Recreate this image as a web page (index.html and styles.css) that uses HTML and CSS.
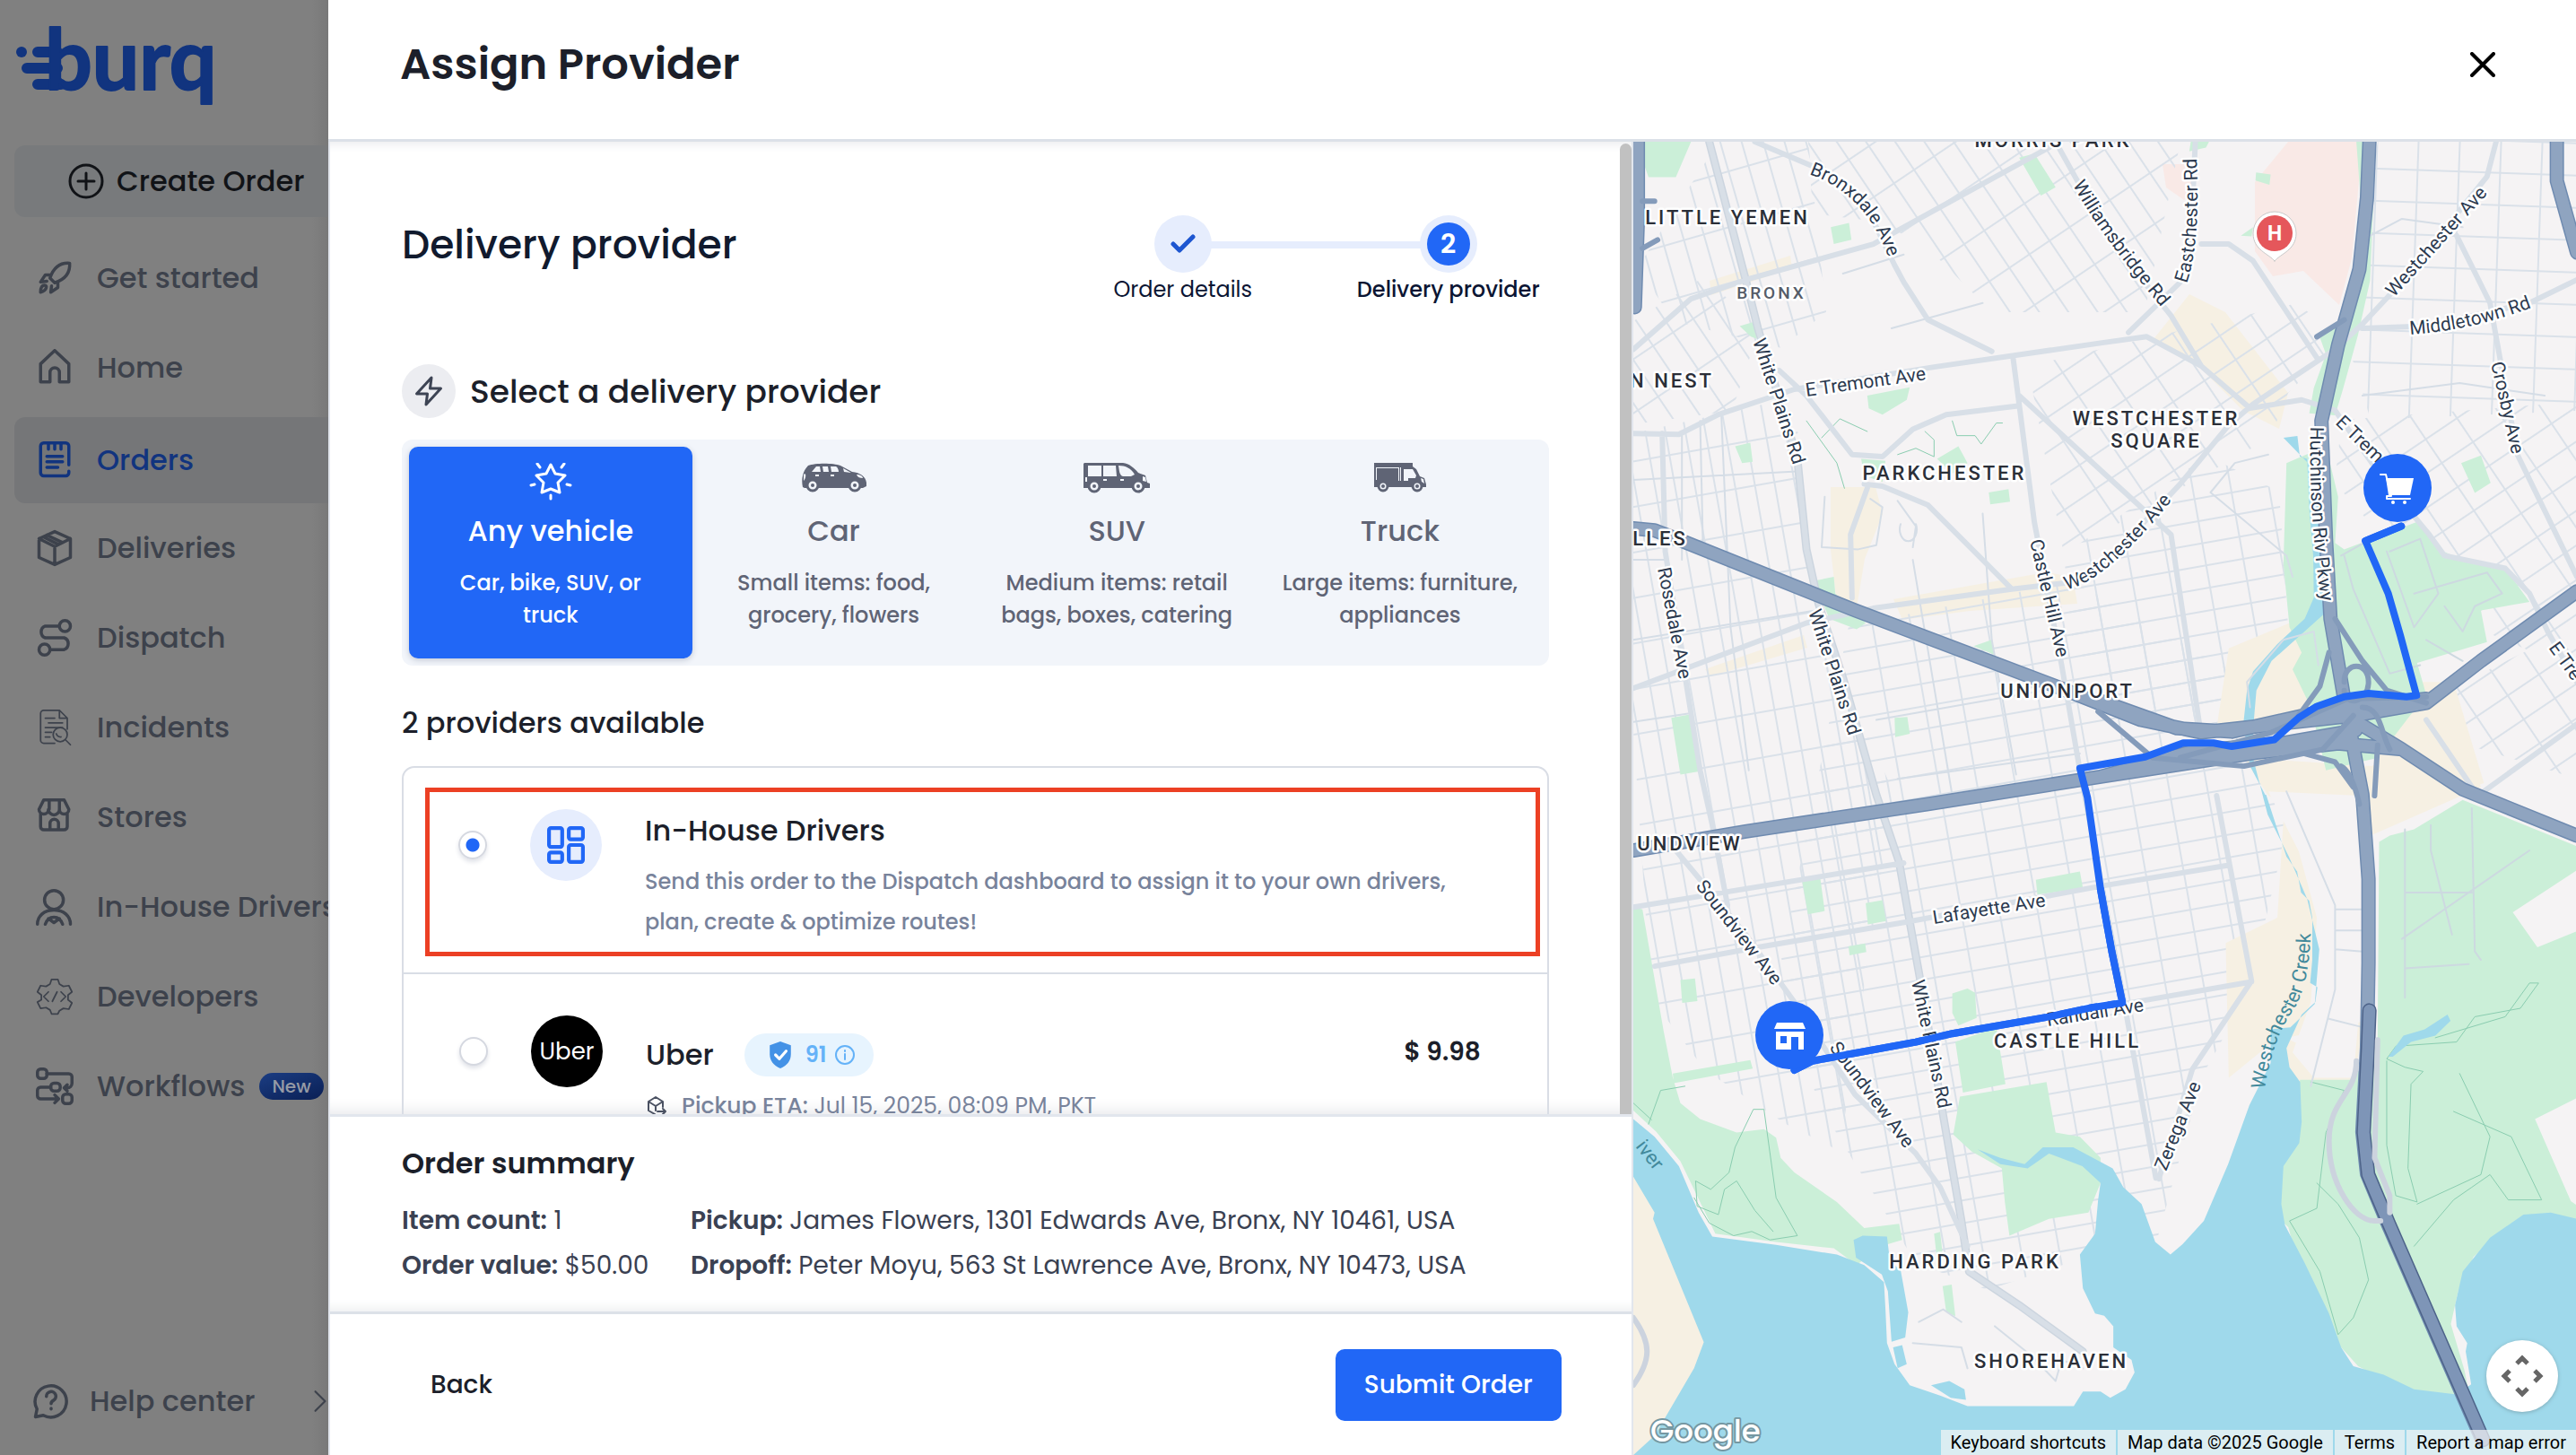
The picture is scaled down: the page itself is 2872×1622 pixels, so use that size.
FILE: index.html
```html
<!DOCTYPE html>
<html lang="en">
<head>
	<meta charset="utf-8">
	<title>Assign Provider</title>
	<link rel="stylesheet" href="styles.css">
</head>
<body>
	<div class="app">
	    <aside class="sidebar">
	        <svg class="logo" viewBox="0 0 250 130" role="img" aria-label="burq">
	            <path class="logo-lines" d="M42 41h22M30 59h34M42 77h26"/>
	            <circle cx="24" cy="41" r="6"/>
	            <text x="50" y="83">burq</text>
	        </svg>
	        <button class="create" type="button">
	            <svg viewBox="0 0 40 40"><circle cx="20" cy="20" r="18"/><path d="M20 11v18M11 20h18"/></svg>
	            Create Order
	        </button>
	        <nav class="nav">
	            <a href="#"><svg viewBox="0 0 24 24"><path d="M9 12C11 6 15 2 21.500 2.500 22 9 18 13 12 15zM9 12l3 3M9.500 10H6l-3 4.500 4-.5M14 14.500V18l-4.500 3 .5-4M3 21c0-2.500.5-4.500 2.500-4.500S7 20 3 21z"/></svg>Get started</a>
	            <a href="#"><svg viewBox="0 0 24 24"><path d="M3 9.500L12 1l9 8.500V21h-6v-6a3 3 0 0 0-6 0v6H3z"/></svg>Home</a>
	            <a href="#" class="active"><svg viewBox="0 0 24 24"><path d="M21 15V3a2 2 0 0 0-2-2H5a2 2 0 0 0-2 2v17a2 2 0 0 0 2 2h14a2 2 0 0 0 2-2v-1M8 1v4M12 1v4M16 1v4M7 9.500h10M7 13h10M7 16.500h7"/></svg>Orders</a>
	            <a href="#"><svg viewBox="0 0 24 24"><path d="M12 1.500l10 4.500v12l-10 4.500L2 18V6zM2 6l10 5 10-5M12 11v11M7 3.700l10 4.800M5 5l9 4.500"/></svg>Deliveries</a>
	            <a href="#"><svg viewBox="0 0 24 24"><circle cx="18.500" cy="4.500" r="3.500"/><circle cx="5.500" cy="19.500" r="3.500"/><path d="M15 4.500H6a4 4 0 0 0 0 7.500h12a4 4 0 0 1 0 7.500H9"/></svg>Dispatch</a>
	            <a href="#"><svg class="fine" viewBox="0 0 24 24"><path d="M12 22H5a2 2 0 0 1-2-2V3a2 2 0 0 1 2-2h10l5 5v7M15 1v5h5M6 6h6M8 9h9M6 12h11M6 15h4M6 18h3"/><circle cx="15.500" cy="16.500" r="4.500"/><path d="M19 20l3 3M13 16a3 3 0 0 0 3 2"/></svg>Incidents</a>
	            <a href="#"><svg viewBox="0 0 24 24"><path d="M5 1h13l3 6a3 3 0 0 1-6 0 3.500 3.500 0 0 1-7 0 3 3 0 0 1-6 0zM8.500 1v6M15 1v6M3 10v8a2 2 0 0 0 2 2h13a2 2 0 0 0 2-2v-8M9 20v-4a2.700 2.700 0 0 1 5.400 0v4"/></svg>Stores</a>
	            <a href="#"><svg viewBox="0 0 24 24"><circle cx="11.500" cy="7.500" r="6"/><path d="M1 23c0-5 4-9 10.500-9S22 18 22 23M6 23c1-3 3-4.500 5.500-4.500S16 20 17 23M8 19.500l3.500 2.500 3.500-2.500"/></svg>In-House Drivers</a>
	            <a href="#"><svg class="fine" viewBox="0 0 24 24"><path d="M10 1h4l1 3 2.500 1.500L21 5l2 4-2.500 2v3l2.500 2-2 4-3.500-.5L15 21l-1 2h-4l-1-2.500L6.500 19 3 19.500l-2-4L3.500 14v-3L1 9l2-4 3.500.5L9 4zM8 9l-3 3 3 3M16 9l3 3-3 3M13.500 9l-3 6"/></svg>Developers</a>
	            <a href="#"><svg viewBox="0 0 24 24"><rect x="1" y="1" width="6" height="6" rx="2"/><rect x="9.500" y="10" width="6" height="5" rx="2"/><rect x="17" y="17" width="6" height="6" rx="2"/><path d="M7 4h14a2 2 0 0 1 2 2v4a3 3 0 0 1-3 3h-2M20 11l-2 2 2 2M9.500 12.500H3a2 2 0 0 0-2 2V18a2 2 0 0 0 2 2h11M12 17.500l2.500 2.500-2.500 2.500"/></svg>Workflows<span class="new">New</span></a>
	        </nav>
	        <a href="#" class="help">
	            <svg viewBox="0 0 24 24"><path d="M2 22l1-5a10 10 0 1 1 4 4zM9 9a3 3 0 1 1 4.500 2.500c-1 .6-1.500 1-1.500 2M12 16.500v.5"/></svg>
	            Help center
	            <svg class="chevron" viewBox="0 0 16 24"><path d="M3 2l10 10L3 22"/></svg>
	        </a>
	    </aside>

	    <main class="drawer">
	        <header class="drawer-head">
	            <h1>Assign Provider</h1>
	            <button class="close" type="button" aria-label="Close"><svg viewBox="0 0 28 28"><path d="M2 2l24 24M26 2L2 26"/></svg></button>
	        </header>
	        <div class="drawer-body">
	            <section class="panel">
	                <div class="scroller">
	                    <div class="panel-head">
	                        <h2>Delivery provider</h2>
	                        <ol class="steps">
	                            <li><span class="dot"><svg viewBox="0 0 28 22"><path d="M3 11l7 7L25 3"/></svg></span>Order details</li>
	                            <li class="current"><span class="dot"><b>2</b></span>Delivery provider</li>
	                        </ol>
	                    </div>

	                    <h3 class="select-title">
	                        <span class="bolt"><svg viewBox="0 0 24 24"><path d="M14 2L3 14h8l-1 8L21 10h-8z"/></svg></span>
	                        Select a delivery provider
	                    </h3>

	                    <div class="vehicles">
	                        <button type="button" class="vehicle selected">
	                            <svg class="star" viewBox="0 0 46 42"><path d="M23 2l5 10 11 2-8 8 2 11-10-4-10 4 2-11-8-8 11-2zM8 1l3 4M38 1l-3 4M1 25l4-1M45 25l-4-1M23 36v4"/></svg>
	                            <strong>Any vehicle</strong>
	                            <span>Car, bike, SUV, or truck</span>
	                        </button>
	                        <button type="button" class="vehicle">
	                            <svg viewBox="0 0 74 34">
	                                <path d="M2 27C0 18 2 9 8 3 16 0 36 0 44 3l13 7c9 1 15 5 16 12v4l-4 2H4z"/>
	                                <g class="hole"><path d="M12 10l5-6h4l1 6zM24 4h6l1 6h-6zM33 4h6c2 1 3 4 3 6h-8zM47 6l9 5-8-1zM62 13c4 0 7 2 7 4-3 0-6-1-7-4zM3 13c3-3 3 4 0 7zM16 13h4v2h-4zM33 13h4v2h-4z"/><circle cx="13" cy="25" r="6"/><circle cx="60" cy="25" r="6"/></g>
	                                <circle class="tyre" cx="13" cy="25" r="6"/><circle class="tyre" cx="60" cy="25" r="6"/><circle cx="13" cy="25" r="2"/><circle cx="60" cy="25" r="2"/>
	                            </svg>
	                            <strong>Car</strong>
	                            <span>Small items: food, grocery, flowers</span>
	                        </button>
	                        <button type="button" class="vehicle">
	                            <svg viewBox="0 0 74 34">
	                                <path d="M1 0h43c7 1 12 5 17 11l8 3 2 8 3 1v5H0V1z"/>
	                                <g class="hole"><path d="M5 3h15v12H5zM22 3h14l1 12H22zM39 3c8 0 14 3 18 10l-4 2h-9c-4-1-4-6-5-12zM66 15l3 1 1 5-4-1zM2 16h2v5H2zM22 18h4v2h-4zM41 18h4v2h-4z"/><circle cx="12" cy="26" r="6"/><circle cx="61" cy="26" r="6"/></g>
	                                <circle class="tyre" cx="12" cy="26" r="6"/><circle class="tyre" cx="61" cy="26" r="6"/><circle cx="12" cy="26" r="2"/><circle cx="61" cy="26" r="2"/>
	                            </svg>
	                            <strong>SUV</strong>
	                            <span>Medium items: retail bags, boxes, catering</span>
	                        </button>
	                        <button type="button" class="vehicle">
	                            <svg viewBox="-8 0 74 34">
	                                <path d="M0 0h43v4l4 3 4 8 5 2 2 7v3H0z"/>
	                                <g class="hole"><path d="M2 5h26v15h-1V6H3v13H2zM29 5h1v15h-1zM33 7h10l4 7-1 3h-8v3h-5zM52 17l3 1 1 5-3-2z"/><circle cx="10" cy="26" r="5"/><circle cx="48" cy="26" r="5"/></g>
	                                <circle class="tyre" cx="10" cy="26" r="5"/><circle class="tyre" cx="48" cy="26" r="5"/><circle cx="10" cy="26" r="2"/><circle cx="48" cy="26" r="2"/>
	                            </svg>
	                            <strong>Truck</strong>
	                            <span>Large items: furniture, appliances</span>
	                        </button>
	                    </div>

	                    <h4 class="count">2 providers available</h4>

	                    <div class="providers">
	                        <div class="highlight">
	                            <label class="provider">
	                                <input type="radio" name="provider" checked>
	                                <span class="avatar blue"><svg viewBox="0 0 40 40"><rect x="2" y="2" width="14" height="20" rx="2"/><rect x="23" y="2" width="15" height="12" rx="2"/><rect x="2" y="28" width="14" height="10" rx="2"/><rect x="23" y="20" width="15" height="18" rx="2"/></svg></span>
	                                <span class="info">
	                                    <span class="name">In-House Drivers</span>
	                                    <span class="desc">Send this order to the Dispatch dashboard to assign it to your own drivers, plan, create &amp; optimize routes!</span>
	                                </span>
	                            </label>
	                        </div>
	                        <label class="provider second">
	                            <input type="radio" name="provider">
	                            <span class="avatar black">Uber</span>
	                            <span class="info">
	                                <span class="name">Uber
	                                    <span class="score">
	                                        <svg class="shield" viewBox="0 0 24 28"><path d="M12 0l11 4v9c0 7-4 12-11 15C5 25 1 20 1 13V4z"/><path class="tick" d="M7 14l4 4 7-8"/></svg>
	                                        91
	                                        <svg class="i" viewBox="0 0 24 24"><circle cx="12" cy="12" r="10"/><path d="M12 11v6M12 7v1"/></svg>
	                                    </span>
	                                </span>
	                                <span class="eta"><svg viewBox="0 0 24 24"><path d="M10 21l-7-4V7l8-5 8 5v6M3 7l8 5 8-5M11 12v5M13 18h9M19 15l3 3-3 3"/></svg><span><b>Pickup ETA:</b> Jul 15, 2025, 08:09 PM, PKT</span></span>
	                            </span>
	                            <span class="price">$ 9.98</span>
	                        </label>
	                    </div>
	                    <div class="thumb"></div>
	                </div>

	                <div class="summary">
	                    <h4>Order summary</h4>
	                    <div class="summary-grid">
	                        <span><b>Item count:</b> 1</span>
	                        <span><b>Pickup:</b> James Flowers, 1301 Edwards Ave, Bronx, NY 10461, USA</span>
	                        <span><b>Order value:</b> $50.00</span>
	                        <span><b>Dropoff:</b> Peter Moyu, 563 St Lawrence Ave, Bronx, NY 10473, USA</span>
	                    </div>
	                </div>
	                <footer class="actions">
	                    <button type="button" class="back">Back</button>
	                    <button type="submit" class="submit">Submit Order</button>
	                </footer>
	            </section>

	            <section class="map">
	                <svg class="map-canvas" viewBox="0 0 1052 1464" preserveAspectRatio="xMinYMin slice">
	                    <defs>
	                        <pattern id="g1" width="42" height="25" patternUnits="userSpaceOnUse" patternTransform="rotate(-10)"><path class="street" d="M0 1h42M1 0v25"/></pattern>
	                        <pattern id="g2" width="22" height="50" patternUnits="userSpaceOnUse" patternTransform="rotate(-10)"><path class="street" d="M0 1h22M1 0v50"/></pattern>
	                        <pattern id="g3" width="50" height="27" patternUnits="userSpaceOnUse" patternTransform="rotate(56)"><path class="street" d="M0 1h50M1 0v27"/></pattern>
	                        <pattern id="g4" width="46" height="36" patternUnits="userSpaceOnUse" patternTransform="rotate(2)"><path class="street" d="M0 1h46M1 0v36"/></pattern>
	                        <pattern id="g5" width="42" height="32" patternUnits="userSpaceOnUse" patternTransform="rotate(-34)"><path class="street" d="M0 1h42M1 0v32"/></pattern>
	                        <pattern id="g6" width="23" height="60" patternUnits="userSpaceOnUse" patternTransform="rotate(-16)"><path class="street" d="M0 1h23M1 0v60"/></pattern>
	                    </defs>
	                    <rect width="1052" height="1464" fill="#f5f3f4"/>

	                    <!-- commercial strips and the hospital campus -->
	                    <path class="sand" d="M85 155l90-28 2 14-90 30zM220 385h50l8 30-20 50-10 60h-20l-8-70zM290 510l170-30 30 5 5 30-120 8-75 10zM80 588l110-38 4 14-108 32zM620 170l40 20 70 90-10 40-40-20-60-60-40-20z"/>
	                    <path class="rose" d="M730 0h83l-12 130-14 52-40-38-34 6-20-28V45zM590 25h36v30l-12 10-20-14z"/>

	                    <!-- street grids -->
	                    <path fill="url(#g6)" d="M95 0h100l20 190-50 40-120-30-40-60z"/>
	                    <path fill="url(#g3)" d="M195 0h415l-40 190-170 0-60-60-60-40-80-10zM0 200l80-50 60 60-30 90-110 15z"/>
	                    <path fill="url(#g2)" d="M0 325l180-40 20 240 90 200-60 400-60-30-90-60-60-80-20-300z"/>
	                    <path fill="url(#g1)" d="M240 540l250-50 230 130 20 100-55 230-50 90-50 180-100 30-90 30-80-30-110-180-40-160z"/>
	                    <path fill="url(#g5)" d="M440 250l300-70 50 40-60 60-20 50-230 130z"/>
	                    <path fill="url(#g1)" d="M480 460l160-110 80 40 10 150-20 90-60 20-110-30-50-60z"/>
	                    <path fill="url(#g4)" d="M830 0h222v300l-230 10-30-100z"/>
	                    <path fill="url(#g5)" d="M790 310l262-20v300l-140-60-130-150zM850 640l202-100v170l-130-40z"/>

	                    <!-- land cover; drawn on a 3106 x 3119 sheet and scaled to the pane -->
	                    <g class="sheet" transform="scale(.3387 .4694) translate(-30 -17)">
	                        <path class="sand" d="M2190 1160l90 10 10 180-60 50-280 10 40-190zM2040 1480l420 20 300-100 60 150-380 120-320-100zM1980 1920l170-60 20-230 120 170 20 200-60 170-90-30-170 100zM2150 2150l60 100 190-5 40-140z"/>
	                        <path class="land" d="M2120 1560l300 10 10 430-30 240-130 0-70-60 60-120 20-200-60-160z"/>
	                        <path class="sand" d="M2470 1300h260l100 240-360 80z"/>
	                        <path class="park" d="M65 17h155l-50 84H80L65 70zM1300 55l50-10 70 80-48 20zM680 220l60-10 8 40-58 10zM380 455l45-10 12 40-20-5zM365 740l50-8 8 45-35 3zM800 620l140-20-10 30-80 35-45-15zM780 770l80 5-10 50-60-15zM1030 770l70-30 30 40-50 25zM1200 850l65-8 5 30-65 6zM155 1385l60-8 35 135-65 8zM625 1060l65-10 5 40 100 70-30 15-90-25zM890 1385l42-2 8 40-48 8zM1150 1215l60-15 8 35zM585 1770l60-6 15 80-55 8zM795 1825l55-7 12 50-60 8zM738 1928l55-7 4 20-55 8zM1355 1770l145-20 10 40-150 15zM185 2008l48-4 8 54-50 4zM1080 2040l50-12 25 10 5 60-60 18-20-30zM2755 780l65-18 32 65-52 24zM1020 2610l20-4 10 65-20 2zM1048 2735l30-4 12 75-30-10zM1860 40l5-23h60l-10 14zM2080 90l48 5-4 24-46-10zM2030 240l40-20-5 22z"/>
	                        <path class="park" d="M30 1835l30 5 70 290 30 110 25 60 65 38 120 32 90-8 40 20 15 48 45 35 140 70 90 62 115-10 10 38-70 15-80 45-75-40-190-15-200-20-115-172-80-70-75-50zM160 2230l255-32 8 20-260 35zM1090 2155l135-35 30 135-140 20zM1105 2285l285-35 30 120 80 10 68 50v60l-40 70-130 15-130 40-15-80-10-80-100-40-60-40z"/>
	                        <path class="park" d="M2410 17h65l-20 330-40 130-50 130-25 60-85-5 15-60 40-80-20-40 60-40 50-130 25-150zM2310 740l40 120-10 110 30 15 240-65 70 65 50 15 170 30 80 80-160 20 20 75-230 50 30 75-160 150-170 30-50-150-60-90 30-40-40-60-20-150 10-240z"/>
	                        <path class="park" d="M2225 2245h175l80-95 5-470 35-15 80-15 160-70 376 110v900l-80-15-150 20-110 70-50 80-25 80 45 110 20 70-50 0-160-20-160-60-150-120-80-210-90-60z"/>
	                        <path class="land" d="M2925 1847l211-100v145l-130 38zM2998 2338l138-50v255l-20-10z"/>
	                        <path class="park-line" d="M600 680l100 100 25 60M650 720l60-45 90 30M900 760l60-15 60 20 0-40-30-20M1080 680l15 35 60 0 20 20 50-50h20M230 2525l50 60 80 30 60-10 60 20 90-10-70-90-40-210-35 0-60 90-20 60-60 40-50-20 5 60 70 20 20-60 40-20 60 70 60 50M80 2350l40-80 80-10M30 2300l60 40M2260 2250l110 20-60 100-30 180-90 30 100 120 60 150 50-40 50-90-30-100-70-80-70-50M2510 2200v200l30 120 70 15-30-80 10-200 40-30-60-10-60-20 30-30 200-10 60-60 150-20 60-60-30 0-80 80-230 50M2750 2230l100 150-30 90-210 70M2600 2640l130-110 60-30 60-30 60 60 110 0-100-150-190-60"/>
	                        <path class="park-path" d="M2360 1000l100-40M2370 1000l30 80 60 100 60 100 100-20M2520 990l100-30 60 130-80 80-90-180M2600 1090l240-50 50 50-90 30-40 60-60-60M2640 1200l120 50M2570 1650v400M2570 1800h220M2570 1980l210-10M2655 1640v60l70 200M2790 1600l10 340 20 20M2560 1910l420-210"/>
	                        <path class="water" d="M2170 720l46-4 8 49 24 5 8 130 12 100 2 100-30 50-90 60-80 65-20 45-12 80 22 100 50 68h3l37 82 30 65 35 35 13 50 27 20 10 40v100l-7 55 24 10-7 35-45 30-50 80 10 45 35 35 5 95-8 50-52 55-7 90 12 50 65 90 80 120 40 80 40 45 100 20 100 35 140 12 48-24-18-78 5-20-35-40-5-50 25-80 90-80 110-55 90-5 86 15v561H30v-798l70 42 80 70 65 110 45 57 210 20 200 23 90 25 65 40 5 65 5 80 25 50 50 50 100 25 90 25h350l30-35h58l32 15 50-20 30-40-10-30-60-30v-50l-30-25-30-5-40-60-10-80 50-50 10-80 8-40-60-40-110-30-70 35-90-10-75-35 75 20 80 15 60-40 100 0 130 50 35 45 60 40 45 90 50 30 40-25 70-55 80-135 70-140 70-100v-80l65-5 80-55 15-130-40-120-60-100-70-100-50-140 3-70 10-85 50-70 170-110 15-40-5-140-20-150z"/>
	                        <path class="water" d="M755 2625l30-10 80 2 10 60 35 20 25 100-10 60-45 10-12-120-20-40-85-40zM885 2880l30-5 15 45-30 10zM1010 2970l60-10 50 20 5 25-50-5zM2515 2190l50-50 70-15 75-35 10 15-50 35-80 15-60 35z"/>
	                        <path class="sand" d="M30 2475l70 85-5 15 167 293-32 62-130 160-70 46v-661z"/>

	                        <!-- local roads -->
	                        <path class="minor" d="M30 1395l180-20M30 1200l600-70M30 1010h100M250 680l10 320M320 670l30 500 60 340M190 710v300M30 820l540-20M720 330l200-45M880 460l300-60M900 870l60 60-10 50M910 925a28 28 0 1 0 50 0M660 860l-10 120 120 5 60-10 20-90-40-20M830 1390l630-80M900 1530l600-60M950 1010l130 560M1180 900l30 300 80 320M2430 620l320-30 280 30M2430 250l130-50 200 20M1930 850l80-70 110-20M1930 850l250 150 20 50M2060 1360l-10-60 120-100 100-20 15 80M2180 1560l160 270v200l-80 230M2340 1840h90M2340 1890h90M2340 1935l90 5M2320 2100l110 20M950 2870l160 10 20 50M970 2820l80-30 60 30M1220 2830l120 70 80 60 20-50 70 20"/>
	                        <!-- arterials -->
	                        <path class="road-edge" d="M280 17L400 345l40 115 130 310 30 215 40 130 80 175 110 278 75 160 25 102 50 200 70 300 60 250 25 120 165 80 210 110"/>
	                        <path class="road" d="M280 17L400 345l40 115 130 310 30 215 40 130 80 175 110 278 75 160 25 102 50 200 70 300 60 250 25 120 165 80 210 110M30 710l150 2 130-47 250-60 460-53 548-57 152-15 180 70 160 100 170-20 110 25 160 165 150 130 50 50 200 30 80 60 60 90 96 120M510 560l90 60 150 140 100 5 100-65 110-35 230-20M790 830l60 5 150 45 270 195M800 840l-55 110 5 150M1280 530l20 110 50 280 90 340 60 250 150 568 100 400M30 1315l570-155 220-35 450-45 180-15 118-35 262-200 160-140 80-50 270-130 90-60 130-100 280-250 30-83M430 17l190 58 170 85 100 150 30 40 80 90 210 75M30 510l190-120 180-45 420-85 200-80 380-150M1430 30l170 220 200 180 100 120M170 1700l230 200 160 160 200 220 200 140 80 80 90 140M100 1975l340-45 490-60 638-85 422-50M1950 1570l115 440-195 210-110 260M1640 2065l425-53M1880 17l-20 313-200 140M2740 240l110 160 90 360 196 290M2430 460l210-5 340-55 156-55M125 710l10 280 75 340 40 180 40 130 50 190M30 1835l210-25 680-80M1300 620l500 330 110 530M1900 260l90 0 80 40 210 230M2640 1390l170 180 326-170"/>

	                        <!-- highways -->
	                        <path class="hwy-edge" d="M30 935l70 5 90 25 570 165 660 180 280 80 200 30 500-40 240-30 180-100 316-165M30 1700l370-45 600-65 568-65 300-60 300-20 240-30M1568 1345l252 65 180 8 270-44 200-20 170-14M1568 1525l512-57 270-22 210 14M2453 17l-8 133-25 170-70 180-55 180 15 280 15 190 45 190 60 228 20 200v200l-5 200-15 200 15 100 68 118 310 512M3070 17v93l66 170M2400 1390l160 70 200 95 376 110M45 17v183l-10 210"/>
	                        <path class="hwy" d="M30 935l70 5 90 25 570 165 660 180 280 80 200 30 500-40 240-30 180-100 316-165M30 1700l370-45 600-65 568-65 300-60 300-20 240-30M1568 1345l252 65 180 8 270-44 200-20 170-14M1568 1525l512-57 270-22 210 14M2453 17l-8 133-25 170-70 180-55 180 15 280 15 190 45 190 60 228 20 200v200l-5 200-15 200 15 100 68 118 310 512M3070 17v93l66 170M2400 1390l160 70 200 95 376 110M45 17v183l-10 210"/>
	                        <path class="bridge-edge" d="M2453 2080l-5 90-14 200 15 100 69 118 310 512"/>
	                        <path class="bridge" d="M2453 2080l-5 90-14 200 15 100 69 118 310 512"/>
	                        <path class="ramp" d="M1560 1370l180 110 300 20 260-40 100-80M1830 1480l300-60 250-80 260-5M2340 1150l90 100 80 70 130 30M2320 1230l-30 80-70 70M2370 1300c0-50 80-50 80 0s-80 60-80 20M2430 1360c60 0 60 60 90 100M2360 1500c30 10 50 60 60 90M2470 1570l10-120M2240 1470l100 20 60 60M2280 480l90-40M100 158H60M60 270l50-20"/>
	                        <path class="ramp-light" d="M2410 2200c0 80-90 90-90 190s80 190 150 190h20M2480 2150l-10 280 50 90v40M30 2810c60 60 60 100 0 160"/>

	                        <path class="route" d="M2558 930l-118 35 75 125 40 100 53 142-33 3-125-8-80 8-90 23-60 27-80 52-140 16-60-8h-100l-125 33-215 27 25 70 43 218 37 147 35 122-100 11-140 22-320 40-120 20-340 45-60 22"/>
	                    </g>

	                    <g class="area">
	                        <text x="468" y="6">MORRIS PARK</text>
	                        <text x="105" y="92">LITTLE YEMEN</text>
	                        <text x="154" y="175" class="soft">BRONX</text>
	                        <text x="43" y="274">N NEST</text>
	                        <text x="30" y="450">LLES</text>
	                        <text x="583" y="316">WESTCHESTER</text>
	                        <text x="583" y="341">SQUARE</text>
	                        <text x="347" y="377">PARKCHESTER</text>
	                        <text x="484" y="620">UNIONPORT</text>
	                        <text x="63" y="790">UNDVIEW</text>
	                        <text x="484" y="1010">CASTLE HILL</text>
	                        <text x="381" y="1256">HARDING PARK</text>
	                        <text x="466" y="1367">SHOREHAVEN</text>
	                    </g>
	                    <defs>
	                        <path id="p-bronxdale" d="M196 36Q264 60 288 140"/>
	                        <path id="p-westchester" d="M483 499Q530 490 612 385"/>
	                        <path id="p-williams" d="M490 48Q520 105 602 200"/>
	                        <path id="p-east" d="M617 158Q634 110 627 0"/>
	                        <path id="p-middle" d="M866 215Q940 210 1014 180"/>
	                        <path id="p-hutch" d="M755 318Q752 430 774 560"/>
	                        <path id="p-creek" d="M704 1057Q712 1000 738 965Q757 930 755 860"/>
	                    </defs>
	                    <g class="streets">
	                        <text><textPath href="#p-bronxdale">Bronxdale Ave</textPath></text>
	                        <text><textPath href="#p-westchester">Westchester Ave</textPath></text>
	                        <text><textPath href="#p-williams">Williamsbridge Rd</textPath></text>
	                        <text><textPath href="#p-east">Eastchester Rd</textPath></text>
	                        <text><textPath href="#p-middle">Middletown Rd</textPath></text>
	                        <text><textPath href="#p-hutch">Hutchinson Riv Pkwy</textPath></text>
	                        <text transform="translate(133 222) rotate(72)">White Plains Rd</text>
	                        <text transform="translate(193 284) rotate(-8)">E Tremont Ave</text>
	                        <text transform="translate(27 476) rotate(79)">Rosedale Ave</text>
	                        <text transform="translate(195 524) rotate(72)">White Plains Rd</text>
	                        <text transform="translate(442 445) rotate(77)">Castle Hill Ave</text>
	                        <text transform="translate(848 174) rotate(-48)">Westchester Ave</text>
	                        <text transform="translate(956 247) rotate(77)">Crosby Ave</text>
	                        <text transform="translate(782 314) rotate(44)">E Trem</text>
	                        <text transform="translate(1020 564) rotate(54)">E Tre</text>
	                        <text transform="translate(69 830) rotate(52)">Soundview Ave</text>
	                        <text transform="translate(218 1010) rotate(53)">Soundview Ave</text>
	                        <text transform="translate(335 872) rotate(-9)">Lafayette Ave</text>
	                        <text transform="translate(310 936) rotate(78)">White Plains Rd</text>
	                        <text transform="translate(594 1148) rotate(-68)">Zerega Ave</text>
	                        <text transform="translate(462 986) rotate(-9)">Randall Ave</text>
	                    </g>
	                    <g class="water-name">
	                        <text><textPath href="#p-creek">Westchester Creek</textPath></text>
	                        <text transform="translate(2 1120) rotate(52)">iver</text>
	                    </g>
	                    <!-- the route runs over the street names -->
	                    <g class="sheet" transform="scale(.3387 .4694) translate(-30 -17)">
	                        <path class="route" d="M2558 930l-118 35M1568 1793l37 147 35 122-100 11-140 22-320 40-120 20-340 45-60 22"/>
	                    </g>

	                    <g class="hospital">
	                        <path d="M715 133c-6-8-24-12-24-31a24 24 0 0 1 48 0c0 19-18 23-24 31z"/>
	                        <circle cx="715" cy="102" r="20"/>
	                        <text x="715" y="110">H</text>
	                    </g>
	                    <g class="pin" transform="translate(852 386)">
	                        <circle r="38"/>
	                        <path d="M-13-11h31l-4 19h-24z"/>
	                        <path class="line" d="M-19-15h6l6 24h-5v3h26"/>
	                        <circle class="w" cx="-5" cy="16" r="2"/><circle class="w" cx="8" cy="16" r="2"/>
	                    </g>
	                    <g class="pin" transform="translate(174 996)">
	                        <circle r="38"/>
	                        <path d="M-14-14h29l3 7h-35zM-15-4h31v20h-6V2H2v14h-17zM-10 1v8h7V1z" fill-rule="evenodd"/>
	                    </g>
	                    <text class="google" x="19" y="1449">Google</text>
	                </svg>
	                <button type="button" class="camera" aria-label="Map camera controls"><svg viewBox="0 0 48 48"><path d="M18 10l6-6 6 6M18 38l6 6 6-6M10 18l-6 6 6 6M38 18l6 6-6 6"/></svg></button>
	                <div class="attribution">
	                    <button type="button">Keyboard shortcuts</button>
	                    <span>Map data ©2025 Google</span>
	                    <a href="#">Terms</a>
	                    <a href="#">Report a map error</a>
	                </div>
	            </section>
	        </div>
	    </main>
	</div>
</body>
</html>
```
FILE: styles.css
```css
* {
	box-sizing: border-box;
}

body {
    margin: 0;
    background: #808080;
    color: #1c1f2a;
    font-family: Poppins, Inter, "Liberation Sans", sans-serif;
    font-size: 28px;
}

h1, h2, h3, h4, ol {
    margin: 0;
    padding: 0;
    list-style: none;
}

h1, h2, h3, h4 {
    font-weight: 500;
}

b {
    font-weight: 600;
}

button {
    border: none;
    background: none;
    padding: 0;
    color: inherit;
    font: inherit;
    cursor: pointer;
}

a {
    color: inherit;
    text-decoration: none;
}

svg {
    flex: none;
    fill: none;
    stroke-linecap: round;
    stroke-linejoin: round;
}

.app {
    display: grid;
    grid-template-columns: 366px 1fr;
    height: 100vh;
}

/* sidebar */
.sidebar {
    display: flex;
    flex-direction: column;
    padding: 17px 0 20px 16px;
    overflow: hidden;
    background: linear-gradient(90deg, #808080 95%, #797979);
    color: #3d424c;
    font-weight: 500;
    white-space: nowrap;
}

.logo {
    width: 250px;
    height: 130px;
    margin-left: -16px;
    overflow: visible;
    fill: #11347f;
}

.logo text {
    font: 700 93px Lato, sans-serif;
    stroke: #11347f;
    stroke-width: 2px;
}

.logo-lines {
    stroke: #11347f;
    stroke-width: 12px;
}

.create {
    display: flex;
    align-items: center;
    gap: 14px;
    height: 80px;
    margin-top: 15px;
    padding-left: 60px;
    border-radius: 12px 0 0 12px;
    background: #787a7c;
    color: #111317;
    font-size: 32px;
}

.create svg {
    width: 40px;
    height: 40px;
    stroke: currentColor;
    stroke-width: 3px;
}

.nav {
    margin-top: 18px;
}

.nav a,
.help {
    display: flex;
    align-items: center;
    gap: 26px;
    height: 100px;
    padding-left: 24px;
    font-size: 32px;
}

.nav svg,
.help svg {
    width: 42px;
    height: 42px;
    stroke: currentColor;
    stroke-width: 2;
}

.nav .fine {
    stroke-width: 1;
}

.nav .active {
    height: 96px;
    margin-top: 5px;
    border-radius: 12px 0 0 12px;
    background: #757678;
    color: #11347f;
}

.nav .new {
    margin-left: -10px;
    padding: 0 14px;
    border-radius: 15px;
    background: linear-gradient(160deg, #1b3d83, #0a1f54);
    color: #959aa5;
    font-size: 20px;
    line-height: 30px;
}

.help {
    margin-top: auto;
    height: 80px;
    gap: 22px;
    padding-left: 20px;
}

.help .chevron {
    width: 18px;
    height: 26px;
    margin: 0 0 0 auto;
    stroke-width: 2;
}

/* drawer */
.drawer {
    display: flex;
    flex-direction: column;
    min-width: 0;
    height: 100vh;
    background: #fff;
}

.drawer-head {
    display: flex;
    align-items: center;
    justify-content: space-between;
    height: 158px;
    padding: 0 90px 12px 80px;
    border-bottom: 3px solid #dce1e8;
}

.drawer-head h1 {
    font-size: 48px;
    font-weight: 600;
}

.close svg {
    display: block;
    width: 28px;
    height: 28px;
    stroke: #000;
    stroke-width: 4px;
}

.drawer-body {
    display: grid;
    grid-template-columns: 1161fr 839fr;
    flex: 1;
    min-height: 0;
}

.panel {
    display: flex;
    flex-direction: column;
    min-width: 0;
    min-height: 0;
    border-left: 2px solid #e2e6ed;
    border-right: 2px solid #e2e6ed;
}

.scroller {
    position: relative;
    flex: 1;
    min-height: 0;
    padding: 82px 92px 0 80px;
    overflow: hidden;
    box-shadow: inset 0 14px 12px -12px #e8e9ec, inset 0 -20px 16px -16px #e8e9ec;
}

.thumb {
    position: absolute;
    top: 2px;
    right: 0;
    width: 13px;
    height: 100%;
    border-radius: 7px 7px 0 0;
    background: #c1c1c1;
}

.panel-head {
    display: flex;
    justify-content: space-between;
    height: 158px;
}

.panel-head h2 {
    color: #111a2e;
    font-size: 44px;
    line-height: 66px;
}

.steps {
    display: flex;
    margin-right: -36px;
    color: #0b1533;
    font-size: 24px;
}

.steps li {
    position: relative;
    display: flex;
    flex-direction: column;
    align-items: center;
    gap: 3px;
    width: 296px;
    line-height: 32px;
}

.steps li + li::before {
    content: "";
    position: absolute;
    top: 29px;
    right: 50%;
    width: 100%;
    height: 8px;
    background: #e6edfd;
}

.steps .current {
    font-weight: 500;
}

.dot {
    position: relative;
    z-index: 1;
    display: flex;
    align-items: center;
    justify-content: center;
    width: 64px;
    height: 64px;
    border-radius: 50%;
    background: #e6edfd;
}

.dot svg {
    width: 28px;
    height: 22px;
    stroke: #1d56d0;
    stroke-width: 5px;
}

.dot b {
    width: 48px;
    border-radius: 50%;
    background: #2167f6;
    color: #fff;
    font-size: 30px;
    line-height: 48px;
    text-align: center;
}

.select-title {
    display: flex;
    align-items: center;
    gap: 16px;
    height: 76px;
    font-size: 36px;
}

.bolt {
    display: flex;
    align-items: center;
    justify-content: center;
    width: 60px;
    height: 60px;
    border-radius: 50%;
    background: #ecedf1;
}

.bolt svg {
    width: 36px;
    height: 36px;
    stroke: #3d4454;
    stroke-width: 2;
}

.vehicles {
    display: grid;
    grid-template-columns: repeat(4, 1fr);
    margin-top: 16px;
    padding: 8px;
    border-radius: 12px;
    background: #f2f5fa;
}

.vehicle {
    display: flex;
    flex-direction: column;
    align-items: center;
    height: 236px;
    padding: 18px 10px 0;
    border-radius: 10px;
    color: #5f6475;
    font-weight: 500;
}

.vehicle svg {
    width: 74px;
    height: 34px;
    margin-bottom: 18px;
    fill: #5f6475;
}

.vehicle .hole {
    fill: #f2f5fa;
}

.vehicle .tyre {
    fill: #f2f5fa;
    stroke: #5f6475;
    stroke-width: 3px;
}

.vehicle .star {
    height: 42px;
    margin-bottom: 10px;
    fill: none;
    stroke: #fff;
    stroke-width: 3px;
}

.vehicle strong {
    margin-bottom: 16px;
    font-size: 32px;
    font-weight: 500;
    line-height: 48px;
}

.vehicle span {
    max-width: 268px;
    font-size: 24px;
    line-height: 36px;
}

.selected {
    background: #2167f6;
    box-shadow: 0 2px 6px #c3c9d6;
    color: #fff;
}

.selected span {
    max-width: 220px;
}

.count {
    margin: 40px 0 24px;
    font-size: 32px;
    line-height: 48px;
}

.providers {
    border: 2px solid #d9dde5;
    border-radius: 14px;
}

.highlight {
    padding: 22px 8px 18px 24px;
    border-bottom: 2px solid #d9dde5;
}

.highlight .provider {
    height: 188px;
    padding: 19px 36px 0 32px;
    border: 5px solid #ec4024;
}

.provider {
    display: flex;
    align-items: flex-start;
}

.provider input {
    appearance: none;
    width: 32px;
    height: 32px;
    margin: 24px 48px 0 0;
    border: 2px solid #d5d8e0;
    border-radius: 50%;
    background: #fff;
    box-shadow: 0 3px 5px #e0e2e8;
}

.provider input:checked {
    background: radial-gradient(#2167f6 7px, #fff 8px);
}

.avatar {
    display: flex;
    flex: none;
    align-items: center;
    justify-content: center;
    width: 80px;
    height: 80px;
    margin-right: 48px;
    border-radius: 50%;
}

.blue {
    background: #e6edfd;
}

.blue svg {
    width: 42px;
    height: 42px;
    stroke: #2167f6;
    stroke-width: 4px;
}

.black {
    background: #000;
    color: #fff;
    font-size: 26px;
}

.info {
    display: flex;
    flex: 1;
    flex-direction: column;
}

.name {
    display: flex;
    align-items: center;
    gap: 34px;
    font-size: 32px;
    font-weight: 500;
    line-height: 48px;
}

.desc {
    margin-top: 10px;
    color: #78839b;
    font-size: 24px;
    font-weight: 500;
    line-height: 45px;
}

.second {
    height: 230px;
    padding: 46px 74px 0 62px;
}

.second .info {
    padding-top: 20px;
}

.score {
    display: flex;
    align-items: center;
    gap: 8px;
    height: 48px;
    padding: 0 20px 0 26px;
    border-radius: 24px;
    background: #e7f4fe;
    color: #64b2f8;
    font-size: 24px;
    font-weight: 600;
}

.shield {
    width: 28px;
    height: 30px;
    margin-right: 6px;
    fill: #4492e6;
}

.shield .tick {
    fill: none;
    stroke: #fff;
    stroke-width: 3px;
}

.score .i {
    width: 24px;
    height: 24px;
    stroke: #64b2f8;
    stroke-width: 2px;
}

.eta {
    display: flex;
    align-items: center;
    gap: 16px;
    margin-top: 11px;
    color: #78839b;
    font-size: 25px;
    line-height: 44px;
}

.eta b {
    font-weight: 500;
}

.eta svg {
    width: 24px;
    height: 24px;
    stroke: #4a5162;
    stroke-width: 2px;
}

.price {
    font-size: 28px;
    font-weight: 600;
    line-height: 82px;
}

.summary {
    height: 220px;
    padding: 28px 80px 0;
    border-top: 3px solid #e2e6ed;
    box-shadow: inset 0 -16px 12px -12px #eeeff1;
}

.summary h4 {
    font-size: 32px;
    font-weight: 600;
    line-height: 48px;
}

.summary-grid {
    display: grid;
    grid-template-columns: 322px 1fr;
    margin-top: 15px;
    color: #3a4152;
    line-height: 50px;
    white-space: nowrap;
}

.actions {
    display: flex;
    align-items: center;
    justify-content: space-between;
    height: 160px;
    padding: 0 78px 0 112px;
    border-top: 3px solid #dce1e8;
    font-weight: 500;
}

.submit {
    width: 252px;
    height: 80px;
    border-radius: 10px;
    background: #2167f6;
    color: #fff;
}

/* map */
.map {
    position: relative;
    overflow: hidden;
    background: #f5f3f4;
    font-family: Roboto, "Liberation Sans", sans-serif;
}

.map-canvas {
    position: absolute;
    width: 100%;
    height: 100%;
}

.street {
    stroke: #dae1e9;
    stroke-width: 2px;
}

.sheet path {
    vector-effect: non-scaling-stroke;
}

.land {
    fill: #f5f3f4;
}

.sand {
    fill: #f6f0e3;
}

.rose {
    fill: #f9e9e6;
}

.park {
    fill: #cbefd8;
}

.park-line {
    stroke: #8acdb0;
    stroke-width: 1px;
}

.park-path {
    stroke: #cdd9e0;
    stroke-width: 2px;
}

.water {
    fill: #9fd9eb;
}

.minor {
    stroke: #d5dde6;
    stroke-width: 2px;
}

.road {
    stroke: #d8dfe7;
    stroke-width: 6px;
}

.road-edge {
    stroke: #ccd5df;
    stroke-width: 9px;
}

.hwy-edge {
    stroke: #6f8bb0;
    stroke-width: 16px;
}

.hwy {
    stroke: #8fa4c0;
    stroke-width: 13px;
}

.bridge-edge {
    stroke: #4d6389;
    stroke-width: 16px;
}

.bridge {
    stroke: #7e95b7;
    stroke-width: 13px;
}

.ramp {
    stroke: #849bba;
    stroke-width: 6px;
}

.ramp-light {
    stroke: #ccd3de;
    stroke-width: 6px;
}

.route {
    stroke: #2167f6;
    stroke-width: 8px;
}

.map-canvas text {
    paint-order: stroke;
    stroke: #fff;
    stroke-width: 5px;
}

.area text {
    fill: #2b2f38;
    font-size: 22px;
    font-weight: 500;
    letter-spacing: 3px;
    text-anchor: middle;
}

.area .soft {
    fill: #555c68;
    font-size: 19px;
}

.streets text {
    fill: #2c3a4f;
    font-size: 21px;
}

.map-canvas .water-name text {
    fill: #42899b;
    stroke: none;
    font-size: 22px;
}

.hospital path {
    fill: #fff;
    stroke: #c9c9c9;
}

.hospital circle {
    fill: #e5575b;
}

.map-canvas .hospital text {
    fill: #fff;
    stroke: none;
    font-size: 23px;
    font-weight: 700;
    text-anchor: middle;
}

.pin circle {
    fill: #2167f6;
}

.pin path,
.pin .w {
    fill: #fff;
}

.pin .line {
    fill: none;
    stroke: #fff;
    stroke-width: 2px;
}

.map-canvas .google {
    fill: #fff;
    stroke: #7597a2;
    stroke-width: 4px;
    font: 500 34px Poppins, Lato, sans-serif;
}

.camera {
    position: absolute;
    right: 20px;
    bottom: 48px;
    width: 80px;
    height: 80px;
    border-radius: 50%;
    background: #fff;
    box-shadow: 0 1px 4px #7fa9b6;
}

.camera svg {
    width: 48px;
    height: 48px;
    margin-top: 6px;
    stroke: #666;
    stroke-width: 5px;
    stroke-linecap: butt;
    stroke-linejoin: miter;
}

.attribution {
    position: absolute;
    right: 0;
    bottom: 0;
    display: flex;
    gap: 2px;
    color: #000;
    font-size: 20px;
    line-height: 28px;
    white-space: nowrap;
}

.attribution > * {
    padding: 0 11px;
    background: rgba(245, 245, 245, .7);
}
```
